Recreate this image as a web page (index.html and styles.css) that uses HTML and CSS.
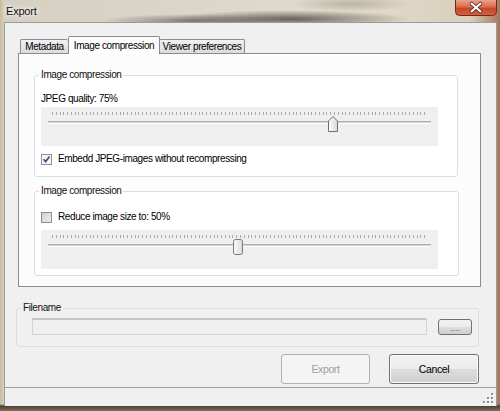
FILE: index.html
```html
<!DOCTYPE html>
<html>
<head>
<meta charset="utf-8">
<link rel="stylesheet" href="styles.css">
</head>
<body>
<div class="window">
  <div class="titlebar">
    <span class="title">Export</span>
    <div class="close">
      <svg width="42" height="16" viewBox="0 0 42 16">
        <defs>
          <linearGradient id="cg" x1="0" y1="0" x2="0" y2="1">
            <stop offset="0" stop-color="#eba48f"/>
            <stop offset="0.45" stop-color="#d9684a"/>
            <stop offset="0.55" stop-color="#c8462a"/>
            <stop offset="1" stop-color="#d7603c"/>
          </linearGradient>
        </defs>
        <path d="M0.5 0 V11.5 Q0.5 15.5 4.5 15.5 H37.5 Q41.5 15.5 41.5 11.5 V0" fill="url(#cg)" stroke="#6e2a1c"/>
        <path d="M16.5 3.5 L25.5 11.5 M25.5 3.5 L16.5 11.5" stroke="#4a2a2a" stroke-width="3.6" stroke-linecap="round"/>
        <path d="M16.5 3.5 L25.5 11.5 M25.5 3.5 L16.5 11.5" stroke="#ffffff" stroke-width="2" stroke-linecap="round"/>
      </svg>
    </div>
  </div>
  <div class="client">
    <div class="tabctl">
      <div class="tabstrip">
        <div class="tab tab-meta">Metadata</div>
        <div class="tab tab-img active">Image compression</div>
        <div class="tab tab-view">Viewer preferences</div>
      </div>
      <div class="tabpanel">
        <fieldset class="group g1">
          <legend>Image compression</legend>
          <div class="label">JPEG quality: 75%</div>
          <div class="slider">
            <div class="rail">
              <div class="ticks"></div>
              <div class="track"></div>
              <div class="thumb" style="--v:0.75">
                <svg width="10" height="16" viewBox="0 0 10 16">
                  <defs>
                    <linearGradient id="tg" x1="0" y1="0" x2="1" y2="0">
                      <stop offset="0" stop-color="#fbfbfb"/>
                      <stop offset="1" stop-color="#dadada"/>
                    </linearGradient>
                  </defs>
                  <path d="M0.5 15.5 V5 L5 0.5 L9.5 5 V15.5 Z" fill="url(#tg)" stroke="#6f6f6f"/>
                  <path d="M2 14 V6" stroke="#ffffff"/>
                </svg>
              </div>
            </div>
          </div>
          <div class="check">
            <span class="box on">
              <svg width="11" height="11" viewBox="0 0 11 11">
                <rect x="0.5" y="0.5" width="10" height="10" fill="#f6f6f6" stroke="#8e8f8f"/>
                <path d="M2.6 5.2 L4.6 7.6 L8.6 2.4" fill="none" stroke="#3b4f86" stroke-width="1.6"/>
              </svg>
            </span>
            <span>Embedd JPEG-images without recompressing</span>
          </div>
        </fieldset>
        <fieldset class="group g2">
          <legend>Image compression</legend>
          <div class="check">
            <span class="box">
              <svg width="11" height="11" viewBox="0 0 11 11">
                <defs>
                  <linearGradient id="bg2" x1="0" y1="0" x2="1" y2="1">
                    <stop offset="0" stop-color="#cfcfcf"/>
                    <stop offset="1" stop-color="#eeeeee"/>
                  </linearGradient>
                </defs>
                <rect x="0.5" y="0.5" width="10" height="10" fill="url(#bg2)" stroke="#8e8f8f"/>
              </svg>
            </span>
            <span>Reduce image size to: 50%</span>
          </div>
          <div class="slider">
            <div class="rail">
              <div class="ticks"></div>
              <div class="track"></div>
              <div class="thumb" style="--v:0.5">
                <svg width="10" height="16" viewBox="0 0 10 16">
                  <rect x="0.5" y="0.5" width="9" height="15" rx="2" fill="url(#tg)" stroke="#7a7a7a"/>
                </svg>
              </div>
            </div>
          </div>
        </fieldset>
      </div>
    </div>
    <fieldset class="filename">
      <legend>Filename</legend>
      <div class="filerow">
        <div class="textbox"></div>
        <div class="browse">....</div>
      </div>
    </fieldset>
    <div class="buttons">
      <div class="btn disabled">Export</div>
      <div class="btn">Cancel</div>
    </div>
    <div class="status">
      <svg class="grip" width="12" height="12" viewBox="0 0 12 12">
        <g fill="#ffffff">
          <rect x="10" y="2" width="2" height="2"/>
          <rect x="6" y="6" width="2" height="2"/><rect x="10" y="6" width="2" height="2"/>
          <rect x="2" y="10" width="2" height="2"/><rect x="6" y="10" width="2" height="2"/><rect x="10" y="10" width="2" height="2"/>
        </g>
        <g fill="#8c8c8c">
          <rect x="9" y="1" width="2" height="2"/>
          <rect x="5" y="5" width="2" height="2"/><rect x="9" y="5" width="2" height="2"/>
          <rect x="1" y="9" width="2" height="2"/><rect x="5" y="9" width="2" height="2"/><rect x="9" y="9" width="2" height="2"/>
        </g>
      </svg>
    </div>
  </div>
</div>
</body>
</html>
```

FILE: styles.css
```css
html, body {
  margin: 0;
  padding: 0;
}

body {
  width: 500px;
  height: 411px;
  overflow: hidden;
  font-family: "Liberation Sans", Arial, sans-serif;
  font-size: 10px;
  letter-spacing: -0.4px;
  color: #000;
  background:
    linear-gradient(to bottom, rgba(0,0,0,0) 404px, #4a4036 406px, #7d6f5b 411px),
    radial-gradient(ellipse 120px 9px at 290px 19px, rgba(60,58,50,0.75), rgba(60,58,50,0)),
    radial-gradient(ellipse 90px 7px at 190px 21px, rgba(70,68,60,0.6), rgba(70,68,60,0)),
    radial-gradient(ellipse 60px 8px at 350px 4px, rgba(150,140,120,0.5), rgba(150,140,120,0)),
    linear-gradient(to right, #c9bb95 0, #d6d0c2 4px, #dcd6ca 40%, #e2dccd 70%, #d9cfbc 94%, #a8775a 100%);
}

.window {
  display: flex;
  flex-direction: column;
  padding: 0 3px 0 4px;
  height: 411px;
  box-sizing: border-box;
}

.titlebar {
  height: 22px;
  display: flex;
  align-items: flex-start;
  margin-right: -3px;
  padding-right: 3px;
}

.title {
  font-size: 11px;
  letter-spacing: -0.2px;
  line-height: 13px;
  padding: 5px 0 0 2px;
  color: #111;
  text-shadow: 0 0 4px #fff, 0 0 6px #fff;
}

.close {
  margin-left: auto;
  width: 42px;
  height: 16px;
}

.close svg {
  display: block;
}

.client {
  background: #f0f0f0;
  border: 1px solid #9b9b9b;
  border-bottom: none;
  height: 384px;
  box-sizing: border-box;
  display: flex;
  flex-direction: column;
}

.tabctl {
  margin: 13px 0 0 13px;
  width: 463px;
}

.tabstrip {
  height: 17px;
  display: flex;
  align-items: flex-end;
  padding-left: 2px;
  position: relative;
  z-index: 1;
}

.tab {
  box-sizing: border-box;
  height: 14px;
  border: 1px solid #898c95;
  border-bottom: none;
  background: linear-gradient(to bottom, #f2f2f2, #e6e6e6 50%, #dadbdd);
  line-height: 12px;
  padding-top: 1px;
  text-align: center;
  border-radius: 2px 2px 0 0;
}

.tab-meta { width: 48px; border-right: none; }
.tab-img { width: 92px; }
.tab-view { width: 86px; margin-left: -1px; }

.tab.active {
  height: 18px;
  margin-bottom: -1px;
  background: #fcfcfc;
  padding-top: 3px;
  position: relative;
  z-index: 2;
}

.tabpanel {
  box-sizing: border-box;
  height: 234px;
  border: 1px solid #898c95;
  background: #fcfcfc;
  padding: 15px 0 0 15px;
  display: flex;
  flex-direction: column;
}

.group {
  margin: 0;
  min-width: 0;
  width: 424px;
  box-sizing: border-box;
  border: 1px solid #d5dfe5;
  border-radius: 3px;
  background: #fff;
}

.group legend,
.filename legend {
  padding: 0 2px;
  margin-left: -2px;
  line-height: 12px;
  color: #101010;
}

.g1 {
  padding: 12px 6px 11px 6px;
}

.g2 {
  margin-top: 8px;
  padding: 14px 6px 6px 6px;
  width: 425px;
}

.label {
  line-height: 12px;
}

.slider {
  margin-top: 2px;
  height: 39px;
  width: 397px;
  background: #efefef;
  padding: 0 7px;
  box-sizing: border-box;
}

.g2 .slider {
  margin-top: 7px;
}

.rail {
  position: relative;
  height: 100%;
  box-sizing: border-box;
  padding-top: 5px;
}

.ticks {
  height: 3px;
  margin: 0 3px 0 4px;
  background: repeating-linear-gradient(90deg, #a9a9a9 0, #a9a9a9 1px, rgba(0,0,0,0) 1px, rgba(0,0,0,0) 3.76px);
}

.track {
  margin-top: 6px;
  height: 1px;
  background: #d2d2d2;
  border-top: 1px solid #b0b0b0;
  border-bottom: 1px solid #ffffff;
}

.thumb {
  position: absolute;
  top: 9px;
  left: calc(var(--v) * 100% - 7px);
  width: 10px;
  height: 16px;
}

.thumb svg {
  display: block;
}

.check {
  display: flex;
  align-items: center;
  height: 12px;
  line-height: 12px;
  margin-top: 7px;
}

.g2 .check {
  margin-top: 0;
}

.box {
  width: 11px;
  height: 11px;
  margin-right: 6px;
}

.box svg {
  display: block;
}

.filename {
  margin: 15px 0 0 11px;
  width: 463px;
  min-width: 0;
  box-sizing: border-box;
  border: 1px solid #d5dfe5;
  border-radius: 3px;
  padding: 4px 6px 11px 6px;
}

.filerow {
  display: flex;
  align-items: flex-start;
  padding-left: 9px;
}

.textbox {
  width: 397px;
  height: 17px;
  box-sizing: border-box;
  border: 1px solid #d4d4d4;
  border-top: 2px solid #c6c6c6;
  background: #efefef;
}

.browse {
  margin: 1px 0 0 11px;
  width: 34px;
  height: 16px;
  box-sizing: border-box;
  border: 1px solid #707070;
  border-radius: 3px;
  background: linear-gradient(to bottom, #f2f2f2, #ebebeb 50%, #dddddd 50%, #cfcfcf);
  color: #555a80;
  font-size: 9px;
  text-align: center;
  line-height: 16px;
  letter-spacing: 0;
}

.buttons {
  margin-top: 7px;
  display: flex;
  justify-content: flex-end;
  gap: 19px;
  padding-right: 17px;
}

.btn {
  width: 90px;
  height: 30px;
  box-sizing: border-box;
  border: 1px solid #707070;
  border-radius: 3px;
  background: linear-gradient(to bottom, #f2f2f2, #ebebeb 50%, #dddddd 50%, #cfcfcf);
  box-shadow: inset 0 0 0 1px #fcfcfc;
  text-align: center;
  line-height: 28px;
  font-size: 10.5px;
}

.btn.disabled {
  width: 89px;
  border-color: #adb2b5;
  background: #f4f4f4;
  box-shadow: none;
  color: #a0a0a0;
}

.status {
  margin-top: 3px;
  border-top: 1px solid #a0a0a0;
  height: 18px;
  display: flex;
  justify-content: flex-end;
  align-items: flex-end;
  padding-right: 2px;
}

.grip {
  display: block;
  margin-bottom: 2px;
}
```
